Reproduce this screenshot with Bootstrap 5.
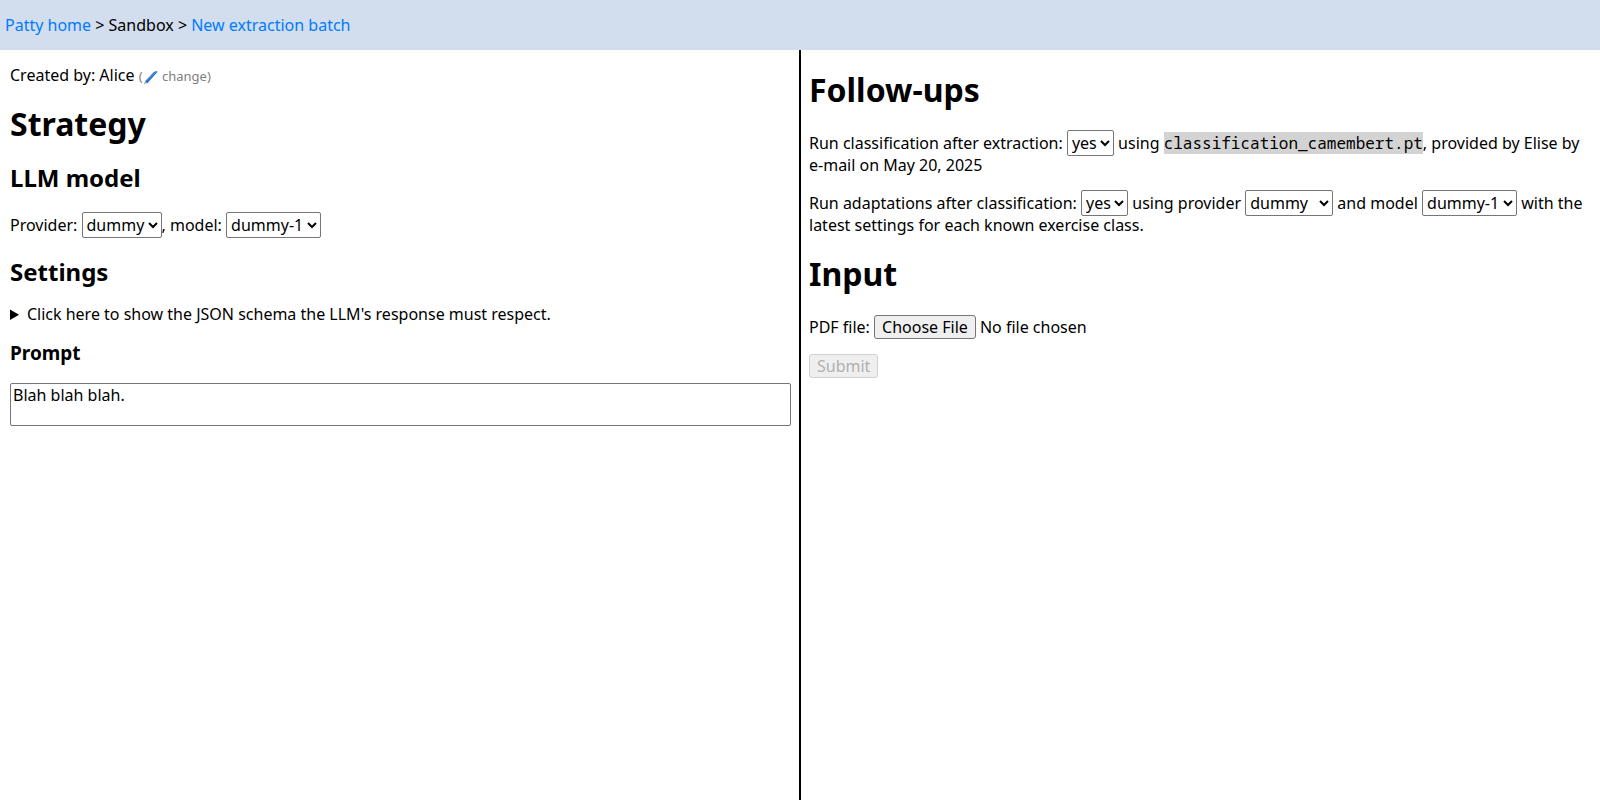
<!DOCTYPE html>
<html lang="en">
<head>
<meta charset="utf-8">
<meta name="viewport" content="width=device-width, initial-scale=1">
<title>Patty - New extraction batch</title>
<link href="https://cdn.jsdelivr.net/npm/bootstrap@5.3.0/dist/css/bootstrap.min.css" rel="stylesheet">
<style>
  body { font: 16px/22px "Noto Sans", sans-serif; color: #000; background: #fff; }
  a { color: #007bff; text-decoration: none; }
  .topbar { background: #d2ddee; padding: 14px 5px; }
  .panes { padding: 0 10px; gap: 8px; }
  .pane { flex: 1 1 0; min-width: 0; }
  .pane-left { padding-top: 14px; }
  .pane-right { padding-top: 18px; }
  .divider { width: 2px; background: #000; }
  h1, h2, h3 { font-weight: 700; margin: 0; }
  h1 { font-size: 32px; line-height: 44px; }
  h2 { font-size: 24px; line-height: 32px; }
  h3 { font-size: 19px; line-height: 27px; }
  .heading-gap { margin-bottom: 20px; }
  .settings-gap { margin-bottom: 15px; }
  select { height: 26px; margin: -2px 0; color: #000; background-color: #fff; border: 1px solid #767676; border-radius: 2px; }
  .provider { width: 88px; }
  .change { font-size: 13px; line-height: 16px; color: gray; }
  .change svg { width: 16px; height: 14px; margin: -2px 0; vertical-align: -2px; }
  code { font: 16px "Noto Sans Mono", "DejaVu Sans Mono", monospace; color: #000; background: #d3d3d3; }
  summary { cursor: pointer; }
  textarea { height: 43px; padding: 1px 2px; line-height: 20px; border: 1px solid #767676; border-radius: 2px; color: #000; resize: none; }
  input[type=file] { margin: -2px 0 -1px; }
  input[type=file]::file-selector-button { height: 24px; padding: 0 7px; line-height: 22px; border: 1px solid #767676; border-radius: 3px; background: #efefef; color: #000; -webkit-appearance: none; appearance: none; }
  .submit { height: 24px; padding: 0 7px; border: 1px solid #767676; border-radius: 3px; background: #efefef; color: #000; }
  .submit:disabled { color: #b0b0b0; border-color: #d1d1d1; }
</style>
</head>
<body class="d-flex flex-column min-vh-100">
<nav class="topbar" aria-label="Breadcrumb">
  <a href="#">Patty home</a> &gt; Sandbox &gt; <a href="#">New extraction batch</a>
</nav>
<main class="panes d-flex flex-grow-1">
  <section class="pane pane-left">
    <p>Created by: Alice <a href="#" class="change">(<svg viewBox="0 0 16 14" aria-hidden="true"><path d="M.6 13.4 2 10.2 4.4 12.2Z" fill="#b8b8b8"/><path d="M2 10.2 10.4 1.4Q12.8-.6 14.8.6L4.4 12.2Z" fill="#1f6fc9"/><path d="M3.4 9.8 12.6 1.2" stroke="#5f9fe4" fill="none"/></svg> change)</a></p>
    <h1 class="mb-3">Strategy</h1>
    <h2 class="heading-gap">LLM model</h2>
    <p class="heading-gap"><label for="provider">Provider:</label> <select id="provider"><option>dummy</option></select>, <label for="model">model:</label> <select id="model"><option>dummy-1</option></select></p>
    <h2 class="settings-gap">Settings</h2>
    <details class="settings-gap">
      <summary>Click here to show the JSON schema the LLM's response must respect.</summary>
    </details>
    <h3 class="mb-3"><label for="prompt">Prompt</label></h3>
    <textarea id="prompt" class="d-block w-100">Blah blah blah.</textarea>
  </section>
  <div class="divider"></div>
  <section class="pane pane-right">
    <h1 class="heading-gap">Follow-ups</h1>
    <p><label for="classify">Run classification after extraction:</label> <select id="classify"><option>yes</option></select> using <code>classification_camembert.pt</code>, provided by Elise by e-mail on May 20, 2025</p>
    <p><label for="adapt">Run adaptations after classification:</label> <select id="adapt"><option>yes</option></select> using <label for="adapt-provider">provider</label> <select id="adapt-provider" class="provider"><option>dummy</option></select> and <label for="adapt-model">model</label> <select id="adapt-model"><option>dummy-1</option></select> with the latest settings for each known exercise class.</p>
    <h1 class="heading-gap">Input</h1>
    <p><label for="pdf">PDF file:</label> <input type="file" id="pdf" accept=".pdf"></p>
    <button type="button" class="submit" disabled>Submit</button>
  </section>
</main>
<script src="https://cdn.jsdelivr.net/npm/bootstrap@5.3.0/dist/js/bootstrap.bundle.min.js"></script>
</body>
</html>
